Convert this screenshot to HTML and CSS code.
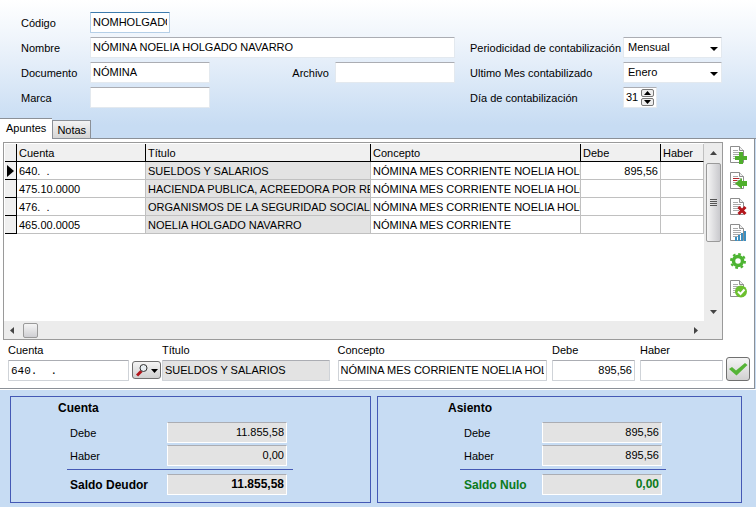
FILE: index.html
```html
<!DOCTYPE html>
<html lang="es">
<head>
    <meta charset="UTF-8">
    <meta name="viewport" content="width=device-width, initial-scale=1.0">
    <title>Asientos predefinidos</title>
    <link rel="stylesheet" href="styles.css">
</head>
<body>

<div class="top">
    <form class="header-form">
        <div class="col-main">
            <div class="row">
                <label for="codigo">Código</label>
                <input type="text" id="codigo" class="w-code focused" value="NOMHOLGADO">
            </div>
            <div class="row">
                <label for="nombre">Nombre</label>
                <input type="text" id="nombre" class="grow" value="NÓMINA NOELIA HOLGADO NAVARRO">
            </div>
            <div class="row">
                <label for="documento">Documento</label>
                <input type="text" id="documento" class="w-field" value="NÓMINA">
                <label for="archivo" class="label-archivo">Archivo</label>
                <input type="text" id="archivo" class="w-field">
            </div>
            <div class="row">
                <label for="marca">Marca</label>
                <input type="text" id="marca" class="w-field">
            </div>
        </div>
        <div class="col-side">
            <div class="row">
                <label for="periodicidad">Periodicidad de contabilización</label>
                <span class="select">
                    <select id="periodicidad"><option>Mensual</option><option>Trimestral</option><option>Anual</option></select>
                </span>
            </div>
            <div class="row">
                <label for="mes">Ultimo Mes contabilizado</label>
                <span class="select">
                    <select id="mes"><option>Enero</option><option>Febrero</option><option>Marzo</option></select>
                </span>
            </div>
            <div class="row">
                <label for="dia">Día de contabilización</label>
                <span class="spin">
                    <input type="text" id="dia" value="31">
                    <span class="spin-buttons">
                        <button type="button" aria-label="Subir"><svg width="7" height="4"><path d="M0 4L3.5 0L7 4z"/></svg></button>
                        <button type="button" aria-label="Bajar"><svg width="7" height="4"><path d="M0 0L3.5 4L7 0z"/></svg></button>
                    </span>
                </span>
            </div>
        </div>
    </form>
    <div class="tabs">
        <button type="button" class="tab active">Apuntes</button>
        <button type="button" class="tab">Notas</button>
    </div>
</div>

<div class="panel">
    <div class="panel-top">
        <div class="grid-box">
            <div class="grid-view">
                <table>
                    <colgroup>
                        <col class="c-mark"><col class="c-cuenta"><col class="c-titulo"><col class="c-concepto"><col class="c-debe"><col>
                    </colgroup>
                    <thead>
                        <tr><th></th><th>Cuenta</th><th>Título</th><th>Concepto</th><th>Debe</th><th>Haber</th></tr>
                    </thead>
                    <tbody>
                        <tr>
                            <th><svg width="7" height="12"><path d="M0 0L7 6L0 12z"/></svg></th>
                            <td>640. &nbsp;.</td><td class="ro">SUELDOS Y SALARIOS</td><td>NÓMINA MES CORRIENTE NOELIA HOLG</td><td class="num">895,56</td><td></td>
                        </tr>
                        <tr>
                            <th></th>
                            <td>475.10.0000</td><td class="ro">HACIENDA PUBLICA, ACREEDORA POR RE</td><td>NÓMINA MES CORRIENTE NOELIA HOLG</td><td></td><td></td>
                        </tr>
                        <tr>
                            <th></th>
                            <td>476. &nbsp;.</td><td class="ro">ORGANISMOS DE LA SEGURIDAD SOCIAL,</td><td>NÓMINA MES CORRIENTE NOELIA HOLG</td><td></td><td></td>
                        </tr>
                        <tr>
                            <th></th>
                            <td>465.00.0005</td><td class="ro">NOELIA HOLGADO NAVARRO</td><td>NÓMINA MES CORRIENTE</td><td></td><td></td>
                        </tr>
                    </tbody>
                </table>
            </div>
            <div class="vscroll">
                <svg width="7" height="4"><path d="M0 4L3.5 0L7 4z"/></svg>
                <div class="thumb-v"><i></i><i></i><i></i><i></i></div>
                <svg width="7" height="4"><path d="M0 0L3.5 4L7 0z"/></svg>
            </div>
            <div class="hscroll">
                <svg width="4" height="7"><path d="M4 0L0 3.5L4 7z"/></svg>
                <div class="thumb-h"></div>
                <svg width="4" height="7"><path d="M0 0L4 3.5L0 7z"/></svg>
            </div>
            <div class="corner"></div>
        </div>

        <svg class="defs" width="0" height="0">
            <symbol id="sheet" viewBox="0 0 18 18">
                <path d="M0.500 0.500h9l4 4v12h-13z" fill="#fff" stroke="#8d8d8d"/>
                <path d="M9.500 0.500v4h4" fill="#eee" stroke="#8d8d8d"/>
                <path d="M3 4.500h5M3 6.500h8M3 8.500h8M3 10.500h8M3 12.500h6" stroke="#aaa"/>
            </symbol>
        </svg>
        <div class="tools">
            <button type="button" aria-label="Añadir"><svg width="18" height="18"><use href="#sheet"/><path d="M9 6h4v4h4v4h-4v4H9v-4H5v-4h4z" fill="#4fae2c"/></svg></button>
            <button type="button" aria-label="Insertar"><svg width="18" height="18"><use href="#sheet"/><path d="M3 6.500h6M3 8.500h4" stroke="#b8242b"/><path d="M5 11.500l7-5.500v3h5v5h-5v3z" fill="#4fae2c"/></svg></button>
            <button type="button" aria-label="Borrar"><svg width="18" height="18"><use href="#sheet"/><path d="M8.500 9l7 7M15.500 9l-7 7" stroke="#b3161c" stroke-width="3"/></svg></button>
            <button type="button" aria-label="Gráfico"><svg width="18" height="18"><use href="#sheet"/><path d="M5 17v-4h2v4zM8 17v-6h2v6zM11 17V9h2v8zM14 17V7h2v10z" fill="#3c8fc0"/></svg></button>
            <button type="button" aria-label="Opciones"><svg width="18" height="18"><circle cx="8" cy="9" r="4.500" fill="none" stroke="#4db432" stroke-width="3.500"/><circle cx="8" cy="9" r="7" fill="none" stroke="#4db432" stroke-width="2" stroke-dasharray="2.750 2.750"/></svg></button>
            <button type="button" aria-label="Validar"><svg width="18" height="18"><use href="#sheet"/><circle cx="11" cy="11.500" r="6" fill="#6cc02f"/><path d="M8 11.500l2.500 2.500l4-4.500" fill="none" stroke="#fff" stroke-width="2"/></svg></button>
        </div>
    </div>

    <form class="entry">
        <div class="field e-cuenta">
            <label for="e-cuenta">Cuenta</label>
            <input type="text" id="e-cuenta" class="mono" value="640.  .">
        </div>
        <button type="button" class="btn-search" aria-label="Buscar cuenta">
            <svg width="22" height="14">
                <path d="M1 12.500L5.500 8" stroke="#b3161c" stroke-width="3"/>
                <circle cx="7.500" cy="5" r="3.500" fill="#e8eef2" stroke="#333"/>
                <path d="M15 6h7l-3.500 4z"/>
            </svg>
        </button>
        <div class="field e-titulo">
            <label for="e-titulo">Título</label>
            <input type="text" id="e-titulo" class="ro" value="SUELDOS Y SALARIOS" readonly>
        </div>
        <div class="field e-concepto">
            <label for="e-concepto">Concepto</label>
            <input type="text" id="e-concepto" value="NÓMINA MES CORRIENTE NOELIA HOLG">
        </div>
        <div class="field e-num">
            <label for="e-debe">Debe</label>
            <input type="text" id="e-debe" class="num" value="895,56">
        </div>
        <div class="field e-num">
            <label for="e-haber">Haber</label>
            <input type="text" id="e-haber" class="num">
        </div>
        <button type="button" class="btn-ok" aria-label="Aceptar">
            <svg width="20" height="14"><path d="M1 7l3-2l4 3.500L17 1l2.500 2L8.500 13.500z" fill="#55b436"/></svg>
        </button>
    </form>
</div>

<div class="totals">
    <section class="total-box">
        <h2>Cuenta</h2>
        <div class="total-row">
            <label for="c-debe">Debe</label>
            <input type="text" id="c-debe" value="11.855,58" readonly>
        </div>
        <div class="total-row">
            <label for="c-haber">Haber</label>
            <input type="text" id="c-haber" value="0,00" readonly>
        </div>
        <hr>
        <div class="total-row saldo">
            <label for="c-saldo">Saldo Deudor</label>
            <input type="text" id="c-saldo" value="11.855,58" readonly>
        </div>
    </section>
    <section class="total-box asiento">
        <h2>Asiento</h2>
        <div class="total-row">
            <label for="a-debe">Debe</label>
            <input type="text" id="a-debe" value="895,56" readonly>
        </div>
        <div class="total-row">
            <label for="a-haber">Haber</label>
            <input type="text" id="a-haber" value="895,56" readonly>
        </div>
        <hr>
        <div class="total-row saldo nulo">
            <label for="a-saldo">Saldo Nulo</label>
            <input type="text" id="a-saldo" value="0,00" readonly>
        </div>
    </section>
</div>

</body>
</html>
```
FILE: styles.css
```css
* {
    box-sizing: border-box;
}

body {
    margin: 0;
    min-height: 100vh;
    display: flex;
    flex-direction: column;
    background-color: #c7dcf3;
    font-family: "Liberation Sans", Arial, sans-serif;
    font-size: 11px;
    line-height: 16px;
    color: #000;
}

input,
select,
button {
    font: inherit;
    color: inherit;
    margin: 0;
}

input {
    min-width: 0;
    height: 21px;
    padding: 0 2px 2px;
    background-color: #fff;
    border: 1px solid #e3e9ef;
    border-top-color: #abadb3;
    border-radius: 1px;
}

button {
    padding: 0;
    cursor: pointer;
}

svg {
    display: block;
}

.defs {
    position: absolute;
}

.num {
    text-align: right;
}

/* Header */
.top {
    background: linear-gradient(#fff, #eef4fb 30%, #c7dcf3 90%);
}

.header-form {
    display: flex;
    gap: 15px;
    padding: 12px 34px 10px 21px;
}

.col-main {
    flex: 1;
    display: flex;
    flex-direction: column;
    gap: 4px;
}

.col-side {
    width: 252px;
    padding-top: 25px;
    display: flex;
    flex-direction: column;
    gap: 4px;
}

.row {
    display: flex;
    align-items: center;
}

.col-main .row > label:first-child {
    width: 69px;
}

.col-side .row > label {
    width: 153px;
    white-space: nowrap;
}

.row .label-archivo {
    margin-left: auto;
    padding-right: 6px;
}

.w-code {
    width: 80px;
}

.w-field {
    width: 120px;
}

.grow {
    flex: 1;
}

.focused {
    border-color: #b5cfe7;
    border-top-color: #3d7bad;
}

.select {
    position: relative;
    width: 99px;
}

.select::after {
    content: "";
    position: absolute;
    right: 4px;
    top: 10px;
    border: 4px solid transparent;
    border-top-color: #000;
    border-bottom: 0;
    pointer-events: none;
}

select {
    appearance: none;
    display: block;
    width: 100%;
    height: 21px;
    padding: 0 16px 2px 4px;
    background-color: #fff;
    border: 1px solid #e3e9ef;
    border-top-color: #abadb3;
    border-radius: 1px;
}

.spin {
    display: flex;
    align-items: center;
    width: 34px;
    height: 21px;
    background-color: #fff;
    border: 1px solid #e3e9ef;
    border-top-color: #abadb3;
}

.spin input {
    width: 16px;
    height: 19px;
    padding: 0 0 2px 2px;
    border: 0;
}

.spin-buttons {
    display: flex;
    flex-direction: column;
    gap: 1px;
    margin-left: 1px;
}

.spin-buttons button {
    display: flex;
    align-items: center;
    justify-content: center;
    width: 13px;
    height: 8px;
    background-color: #eee;
    border: 1px solid #777;
    border-radius: 2px;
}

/* Tabs */
.tabs {
    display: flex;
    align-items: flex-end;
    border-bottom: 1px solid #8b9097;
}

.tab {
    height: 18px;
    padding: 0 4px;
    background: linear-gradient(#f3f3f3, #d5d5d5);
    border: 1px solid #8b9097;
    border-bottom: 0;
}

.tab.active {
    height: 21px;
    margin-bottom: -1px;
    padding: 0 6px 2px;
    background: #fff;
    border-left: 0;
    border-right: 0;
}

/* Panel */
.panel {
    margin-right: 1px;
    padding: 3px 4px 7px 3px;
    background-color: #fff;
    border-right: 1px solid #8b9097;
    border-bottom: 1px solid #8b9097;
}

.panel-top {
    display: flex;
}

.grid-box {
    flex: 1;
    min-width: 0;
    display: grid;
    grid-template-columns: 1fr 18px;
    grid-template-rows: 178px 18px;
    border: 1px solid #9a9a9a;
}

.grid-view {
    overflow: hidden;
    padding: 1px 0 0 1px;
}

table {
    width: 100%;
    table-layout: fixed;
    border-collapse: separate;
    border-spacing: 0;
}

.c-mark {
    width: 12px;
}

.c-cuenta {
    width: 129px;
}

.c-titulo {
    width: 225px;
}

.c-concepto {
    width: 210px;
}

.c-debe {
    width: 80px;
}

th,
td {
    height: 18px;
    padding: 0 0 0 2px;
    overflow: hidden;
    white-space: nowrap;
    font-weight: normal;
    line-height: 16px;
    text-align: left;
    border-right: 1px solid #c0c0c0;
    border-bottom: 1px solid #c0c0c0;
}

th {
    background-color: #f0f0f0;
    border-right-color: #000;
    border-bottom-color: #000;
}

thead th:last-child {
    border-right-color: #c0c0c0;
}

td.num {
    padding-right: 2px;
    text-align: right;
}

.ro {
    background-color: #e3e3e3;
}

/* Scrollbars */
.vscroll,
.hscroll {
    display: flex;
    align-items: center;
    background-color: #ececec;
    fill: #444;
}

.vscroll {
    flex-direction: column;
    padding: 8px 0 7px;
}

.hscroll {
    padding: 0 6px;
}

.vscroll svg:last-child {
    margin-top: auto;
}

.hscroll svg:last-child {
    margin-left: auto;
}

.corner {
    background-color: #ececec;
}

.thumb-v {
    display: flex;
    flex-direction: column;
    align-items: center;
    justify-content: center;
    gap: 1px;
    width: 15px;
    height: 79px;
    margin-top: 8px;
    background: linear-gradient(90deg, #f5f5f5, #c9c9cd);
    border: 1px solid #9a9a9a;
    border-radius: 2px;
}

.thumb-v i {
    width: 7px;
    height: 1px;
    background-color: #555;
}

.thumb-h {
    width: 15px;
    height: 15px;
    margin-left: 9px;
    background: linear-gradient(#f5f5f5, #cfcfd3);
    border: 1px solid #9a9a9a;
    border-radius: 2px;
}

.tools {
    display: flex;
    flex-direction: column;
    gap: 8px;
    width: 27px;
    padding: 4px 0 0 7px;
}

.tools button {
    height: 18px;
    background: none;
    border: 0;
}

.tools button:nth-child(n+5) {
    margin-top: 2px;
}

/* Entry row */
.entry {
    display: flex;
    align-items: flex-end;
    padding: 2px 0 0 5px;
}

.field {
    display: flex;
    flex-direction: column;
    gap: 2px;
}

.field input {
    width: 100%;
    border-color: #cfd3d8;
    border-top-color: #abadb3;
}

.field .ro {
    background-color: #e3e3e3;
}

.field .mono {
    font-family: "Liberation Mono", monospace;
    padding-top: 2px;
}

.e-cuenta {
    width: 121px;
}

.e-titulo {
    flex: 168 1 0;
    margin: 0 8px 0 1px;
}

.e-concepto {
    flex: 210 1 0;
}

.e-num {
    width: 83px;
    margin-left: 5px;
}

.btn-search,
.btn-ok {
    display: flex;
    align-items: center;
    justify-content: center;
    background: linear-gradient(#f5f5f5, #d0d0d0);
    border: 1px solid #707070;
    border-radius: 3px;
}

.btn-search {
    width: 29px;
    height: 18px;
    margin: 0 0 2px 3px;
}

.btn-ok {
    width: 24px;
    height: 24px;
    margin-left: 3px;
}

/* Totals */
.totals {
    display: grid;
    grid-template-columns: 361fr 365fr;
    gap: 6px;
    padding: 6px 14px 4px 10px;
    border-top: 1px solid #fff;
}

.total-box {
    padding: 3px 0 7px 56px;
    border: 1px solid #4459b5;
}

.total-box h2 {
    margin: 0 0 6px -9px;
    font-size: 12px;
    line-height: 16px;
}

.total-row {
    display: flex;
    align-items: center;
    gap: 3px;
    padding-left: 3px;
    margin-bottom: 2px;
}

.total-row label {
    width: 94px;
}

.total-row input {
    width: 120px;
    background-color: #e3e3e3;
    border-color: #fff;
    border-top-color: #abadb3;
    text-align: right;
}

.total-box hr {
    width: 226px;
    height: 1px;
    margin: 3px 0 4px;
    border: 0;
    background-color: #4459b5;
}

.saldo {
    margin-bottom: 0;
    font-size: 12px;
    font-weight: bold;
}

.asiento {
    padding-left: 82px;
}

.asiento h2 {
    margin-left: -12px;
}

.asiento .total-row {
    padding-left: 4px;
}

.asiento .total-row label {
    width: 75px;
}

.asiento hr {
    width: 206px;
}

.nulo {
    color: #0a7a1c;
}
```
